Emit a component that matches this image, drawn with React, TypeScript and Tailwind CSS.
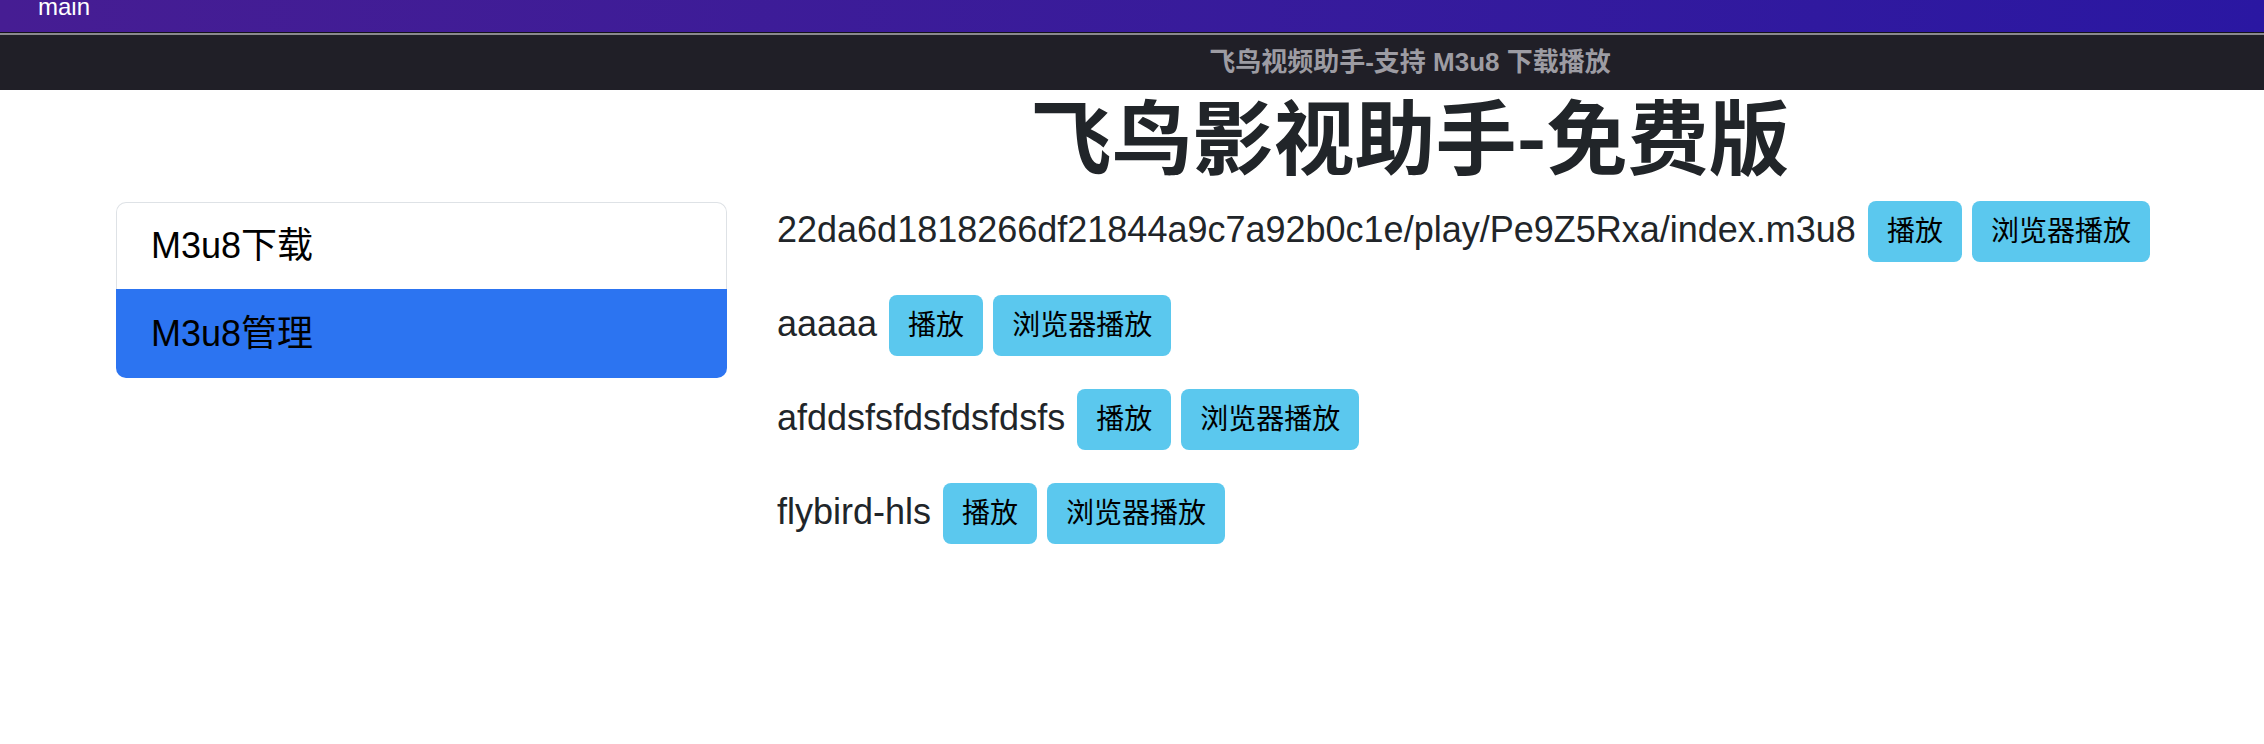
const rows = [
  '22da6d1818266df21844a9c7a92b0c1e/play/Pe9Z5Rxa/index.m3u8',
  'aaaaa',
  'afddsfsfdsfdsfdsfs',
  'flybird-hls',
];

const font = { fontFamily: '"Liberation Sans", "Noto Sans CJK SC", sans-serif' };

function Btn({ children }: { children: string }) {
  return (
    <button className="flex h-[61px] items-center rounded-[8px] bg-[#5bc8ee] px-[19px] text-[28px] leading-[42px] text-black">
      {children}
    </button>
  );
}

export default function App() {
  return (
    <div className="min-h-[744px] bg-white" style={font}>
      {/* window chrome */}
      <div className="h-[32px] overflow-hidden bg-gradient-to-r from-[#461d93] to-[#2a17a2] pl-[38px]">
        <span className="-mt-[5px] block text-[24px] leading-[24px] text-white">main</span>
      </div>
      <div className="h-[1px] bg-[#14121a]" />
      <div className="h-[2px] bg-[#8a898e]" />
      <div className="flex h-[55px] items-center justify-center bg-[#201f27] pl-[556px]">
        <span className="text-[26px] font-bold text-[#9d9ca3]">飞鸟视频助手-支持 M3u8 下载播放</span>
      </div>

      {/* heading */}
      <div className="pl-[556px] text-center">
        <h1
          className="mt-[-5px] text-[81px] font-bold leading-[96px] text-[#212529]"
          style={{ fontFamily: '"Noto Sans CJK SC", sans-serif' }}
        >
          飞鸟影视助手-免费版
        </h1>
      </div>

      <div className="mt-[21px] flex gap-[50px] pl-[116px]">
        {/* sidebar */}
        <div className="w-[611px] shrink-0">
          <div className="flex h-[87px] items-center rounded-t-[10px] border border-b-0 border-[#dee2e6] px-[34px] text-[36px] text-black">
            M3u8下载
          </div>
          <div className="flex h-[89px] items-center rounded-b-[10px] bg-[#2c74f1] px-[35px] text-[36px] text-black">
            M3u8管理
          </div>
        </div>

        {/* list */}
        <div className="-mt-[1px] flex flex-col gap-[33px]">
          {rows.map((r) => (
            <div key={r} className="flex items-center gap-[10px] text-[36px] text-[#212529]">
              <span className="mr-[2px] -translate-y-[2px]">{r}</span>
              <Btn>播放</Btn>
              <Btn>浏览器播放</Btn>
            </div>
          ))}
        </div>
      </div>
    </div>
  );
}
